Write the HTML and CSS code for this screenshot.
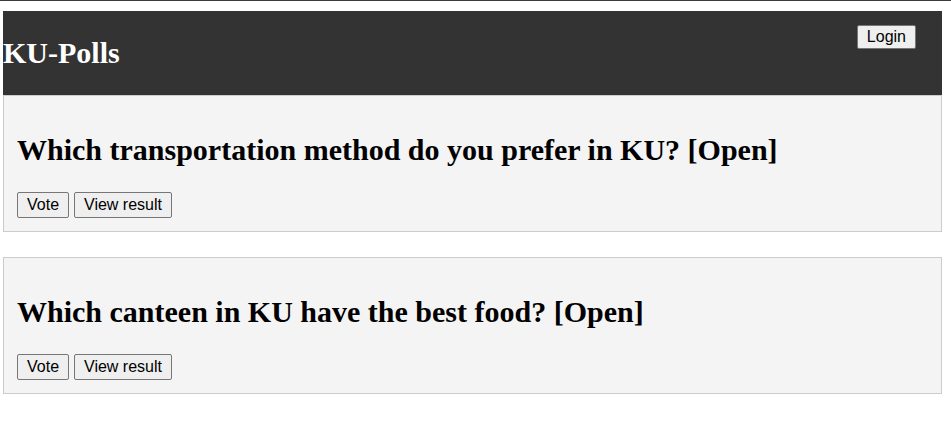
FILE: index.html
```html
<!DOCTYPE html>
<html>
<head>
<meta charset="utf-8">
<title>KU-Polls</title>
<link rel="stylesheet" href="styles.css">
</head>
<body>
<div class="topline"></div>
<main class="page">
  <header class="site-header">
    <h1 class="brand">KU-Polls</h1>
    <button class="btn btn-login">Login</button>
  </header>
  <section class="poll">
    <h2 class="poll-title">Which transportation method do you prefer in KU? [Open]</h2>
    <div class="actions">
      <button class="btn">Vote</button>
      <button class="btn">View result</button>
    </div>
  </section>
  <section class="poll">
    <h2 class="poll-title">Which canteen in KU have the best food? [Open]</h2>
    <div class="actions">
      <button class="btn">Vote</button>
      <button class="btn">View result</button>
    </div>
  </section>
</main>
</body>
</html>
```

FILE: styles.css
```css
html, body {
  margin: 0;
  padding: 0;
  background: #ffffff;
}
body {
  font-family: "Liberation Serif", "Times New Roman", serif;
}
.topline {
  height: 1px;
  background: #3c3c3c;
}
.page {
  margin: 10px 9px 0 3px;
}
.site-header {
  background: #333333;
  display: flex;
  justify-content: space-between;
  align-items: flex-start;
  height: 84px;
}
.brand {
  margin: 25px 0 0 0;
  font-size: 30px;
  line-height: 34px;
  font-weight: bold;
  color: #ffffff;
}
.btn {
  font-family: "Liberation Sans", Arial, sans-serif;
  font-size: 16px;
  line-height: 18px;
  color: #000000;
  background: #efefef;
  border: 1px solid #767676;
  border-radius: 2px;
  padding: 3px 9px;
  margin: 0;
}
.btn-login {
  margin: 14px 26px 0 0;
  padding: 2px 9px;
}
.poll {
  background: #f4f4f4;
  border: 1px solid #cccccc;
  padding: 0 13px 13px 13px;
  margin-bottom: 25px;
}
.poll-title {
  margin: 37px 0 25px 0;
  font-size: 30px;
  line-height: 34px;
  font-weight: bold;
  color: #000000;
}
.actions {
  display: flex;
  gap: 5px;
  align-items: flex-start;
}
```
